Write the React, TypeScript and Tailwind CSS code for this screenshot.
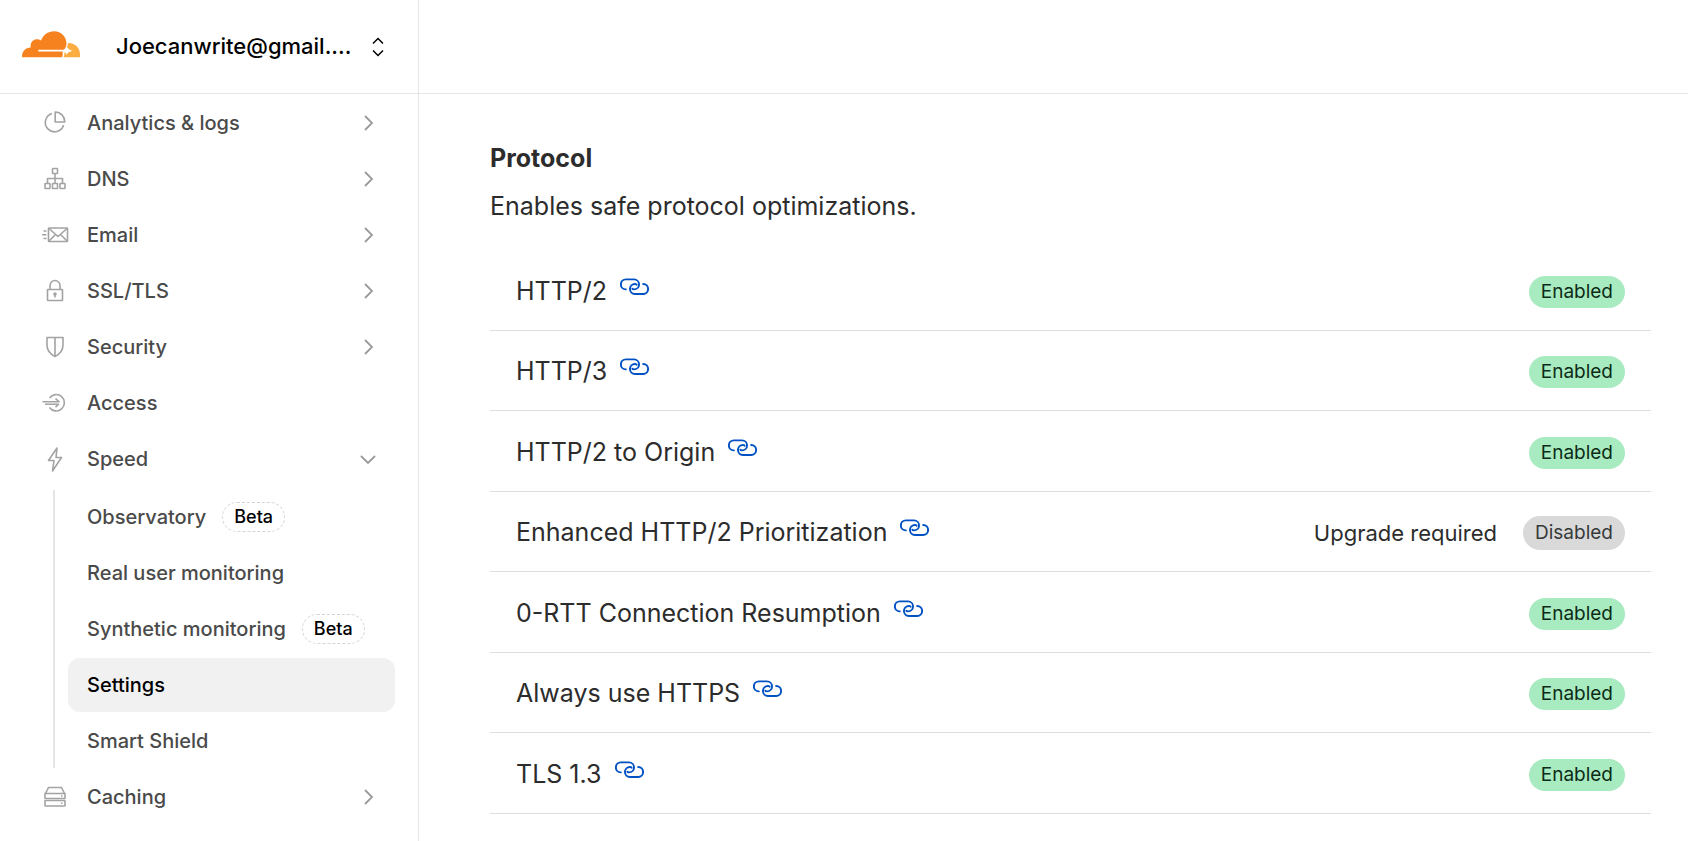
import React from "react";

type IconName = "pie" | "network" | "mail" | "lock" | "shield" | "access" | "bolt" | "drive";

const iconShapes: Record<IconName, React.ReactNode> = {
  pie: (
    <>
      <path d="M11 4.6A9.3 9.3 0 1 0 22.6 16" />
      <path d="M14.2 3v10h9.6A9.6 10 0 0 0 14.2 3Z" />
    </>
  ),
  network: (
    <>
      <rect x="11.5" y="3.5" width="5" height="5" rx="0.6" />
      <rect x="4" y="18.5" width="5" height="5" rx="0.6" />
      <rect x="11.5" y="18.5" width="5" height="5" rx="0.6" />
      <rect x="19" y="18.5" width="5" height="5" rx="0.6" />
      <path d="M14 8.5v10M6.5 18.5v-5h15v5" />
    </>
  ),
  mail: (
    <>
      <rect x="7.5" y="7" width="19" height="13.5" rx="0.6" />
      <path d="M8 7.5l9 8 9-8M8 20l6.5-6.5M26 20l-6.5-6.5M2.5 10h3M1 13.7h4.5M2.5 17.5h3" />
    </>
  ),
  lock: (
    <>
      <rect x="6.5" y="12.5" width="15" height="11" rx="0.6" />
      <path d="M9 12.5V8.5a5 5 0 0 1 10 0v4M14 17.5v3" />
      <circle cx="14" cy="17" r="1" fill="currentColor" />
    </>
  ),
  shield: <path d="M6 4.5h16v7.5c0 5-3 9-8 11.5-5-2.5-8-6.5-8-11.5ZM14 4.5v19" />,
  access: (
    <>
      <path d="M8.5 9A8.2 8.2 0 1 1 8.5 18.5" />
      <path d="M1.5 12.7h16.5l-3.5-3M4 15.2h13.5l-3 3" />
    </>
  ),
  bolt: <path d="M16 3L7.5 15.5H13L11.5 26L20.5 12.5H15Z" />,
  drive: (
    <>
      <path d="M4 11.5L7.5 4.5h13L24 11.5M4 10.5h20v5H4Z" />
      <rect x="4" y="17.5" width="20" height="5.5" rx="0.6" />
      <path d="M20 13h1.5M20 20.2h1.5" />
    </>
  ),
};

function NavIcon({ name }: { name: IconName }) {
  return (
    <svg aria-hidden="true" viewBox="0 0 28 28" className="size-7 shrink-0 text-[#a3a3a3]" fill="none" stroke="currentColor" strokeWidth="1.6" strokeLinejoin="round">
      {iconShapes[name]}
    </svg>
  );
}

function Chevron({ open }: { open?: boolean }) {
  return (
    <svg aria-hidden="true" viewBox="0 0 20 20" className="size-5 shrink-0 text-[#9a9a9a]" fill="none" stroke="currentColor" strokeWidth="1.8">
      <path d={open ? "M3 7l7 7 7-7" : "M7 3l7 7-7 7"} />
    </svg>
  );
}

function CloudLogo() {
  return (
    <svg role="img" aria-label="Cloudflare" viewBox="0 0 58 31" className="w-[58px] shrink-0">
      <path fill="#f6821f" d="M.1 26.300C-.3 21 3 16.800 8.700 16.600 7.700 10 14 6.300 19 9.600 21 4 26 .2 32 .2 39.500.2 44.500 6 44.500 12.500c0 2.200-.8 4.200-2 5.800L40.500 21c.5 1.700.3 3.500-.5 5.300Z" />
      <path fill="#fbad41" d="M46 12C53 11.600 58 17 58 23v3.300H41.500c.8-1.800 1.200-3.600 1-5.300l1-2.500c1.500-2 2.300-4 2.500-6.500Z" />
      <path fill="#fff" d="M16.300 18.800H40.500c2.200-.3 3.500-1.200 4.300-3.300.8 2 2.200 3.200 5.700 4.300-3 .8-5 1.700-5.700 4-.7-2-2-3-4.300-3.200H16.300Z" />
    </svg>
  );
}

function LinkIcon() {
  return (
    <svg aria-hidden="true" viewBox="0 0 30 18" className="w-[29px]" fill="none" stroke="currentColor" strokeWidth="2" strokeLinecap="round">
      <path d="M6 11.8A5.2 5.2 0 0 1 6.2 1.4H14.5A5.2 5.2 0 0 1 14.5 11.8C13.5 11.8 12.8 11.5 12.8 11" />
      <path d="M24 6.2A5.2 5.2 0 0 1 23.8 16.6H15.5A5.2 5.2 0 0 1 15.5 6.2C16.5 6.2 17.2 6.5 17.2 7" />
    </svg>
  );
}

const topItems: { label: string; icon: IconName; expandable: boolean }[] = [
  { label: "Analytics & logs", icon: "pie", expandable: true },
  { label: "DNS", icon: "network", expandable: true },
  { label: "Email", icon: "mail", expandable: true },
  { label: "SSL/TLS", icon: "lock", expandable: true },
  { label: "Security", icon: "shield", expandable: true },
  { label: "Access", icon: "access", expandable: false },
];

const speedItems = [
  { label: "Observatory", beta: true },
  { label: "Real user monitoring" },
  { label: "Synthetic monitoring", beta: true },
  { label: "Settings", active: true },
  { label: "Smart Shield" },
];

const protocols = [
  { label: "HTTP/2", enabled: true },
  { label: "HTTP/3", enabled: true },
  { label: "HTTP/2 to Origin", enabled: true },
  { label: "Enhanced HTTP/2 Prioritization", enabled: false },
  { label: "0-RTT Connection Resumption", enabled: true },
  { label: "Always use HTTPS", enabled: true },
  { label: "TLS 1.3", enabled: true },
];

function NavButton({ label, icon, expandable, open }: { label: string; icon: IconName; expandable: boolean; open?: boolean }) {
  const content = (
    <>
      <NavIcon name={icon} />
      <span className="flex-1 text-left">{label}</span>
      {expandable && <Chevron open={open} />}
    </>
  );
  const style = "flex h-[54px] w-full items-center gap-[18px] rounded-xl pr-[17px] pl-[17px]";
  return expandable ? (
    <button type="button" aria-expanded={!!open} className={style}>{content}</button>
  ) : (
    <a href="#access" className={style}>{content}</a>
  );
}

export default function App() {
  return (
    <div className="flex min-h-screen flex-col bg-white font-['Inter',sans-serif] text-[#2c2c2c]">
      <header className="flex h-[94px] border-b border-[#e5e5e5]">
        <div className="flex w-[419px] shrink-0 items-center border-r border-[#e5e5e5] pr-[30px] pl-[22px]">
          <CloudLogo />
          <button type="button" className="ml-9 flex flex-1 items-center justify-between text-[22px] font-medium text-black">
            <span>Joecanwrite@gmail....</span>
            <svg aria-hidden="true" viewBox="0 0 20 24" className="w-5" fill="none" stroke="currentColor" strokeWidth="1.5">
              <path d="M5 8.5l5-5 5 5M5 15.5l5 5 5-5" />
            </svg>
          </button>
        </div>
      </header>

      <div className="flex flex-1">
        <nav aria-label="Main" className="w-[419px] shrink-0 border-r border-[#e5e5e5] pt-[2px] pr-[23px] pl-6 text-[20px] font-medium text-[#4a4a4a]">
          <ul className="flex flex-col gap-[2px]">
            {topItems.map((item) => (
              <li key={item.label}><NavButton {...item} /></li>
            ))}
            <li>
              <NavButton label="Speed" icon="bolt" expandable open />
              <ul className="mt-1 ml-[29px] flex flex-col gap-[2px] border-l-2 border-[#e5e5e5] pl-[13px]">
                {speedItems.map((item) => (
                  <li key={item.label}>
                    <a
                      href="#speed"
                      aria-current={item.active ? "page" : undefined}
                      className={`flex h-[54px] items-center gap-4 rounded-xl pl-[19px] ${item.active ? "bg-[#f1f1f1] text-black" : ""}`}
                    >
                      {item.label}
                      {item.beta && (
                        <span className="rounded-full border border-dashed border-[#d4d4d4] px-[11px] text-[18px] leading-7 text-black">Beta</span>
                      )}
                    </a>
                  </li>
                ))}
              </ul>
            </li>
            <li><NavButton label="Caching" icon="drive" expandable /></li>
          </ul>
        </nav>

        <main className="flex-1 pt-11 pr-[37px] pl-[71px]">
          <h2 className="text-[25px] leading-10 font-bold">Protocol</h2>
          <p className="mt-2 text-[25px] leading-10">Enables safe protocol optimizations.</p>
          <ul className="mt-6">
            {protocols.map((row) => (
              <li key={row.label} className="flex h-20 items-center justify-between border-b border-[#dedede] px-[26px] pt-[3px] odd:h-[81px]">
                <div className="flex items-center gap-[13px] text-[25px]">
                  <span>{row.label}</span>
                  <a href="#protocol" aria-label={`Link to ${row.label}`} className="pb-[10px] text-[#0051c3]"><LinkIcon /></a>
                </div>
                {row.enabled ? (
                  <span className="rounded-full bg-[#a8ebc0] px-3 text-[19px] leading-8 text-[#0d2b17]">Enabled</span>
                ) : (
                  <div className="flex items-center gap-[26px] text-[22px]">
                    <span>Upgrade required</span>
                    <span className="rounded-full bg-[#d9d9d9] px-3 text-[19px] leading-[34px] text-[#36393a]">Disabled</span>
                  </div>
                )}
              </li>
            ))}
          </ul>
        </main>
      </div>
    </div>
  );
}
